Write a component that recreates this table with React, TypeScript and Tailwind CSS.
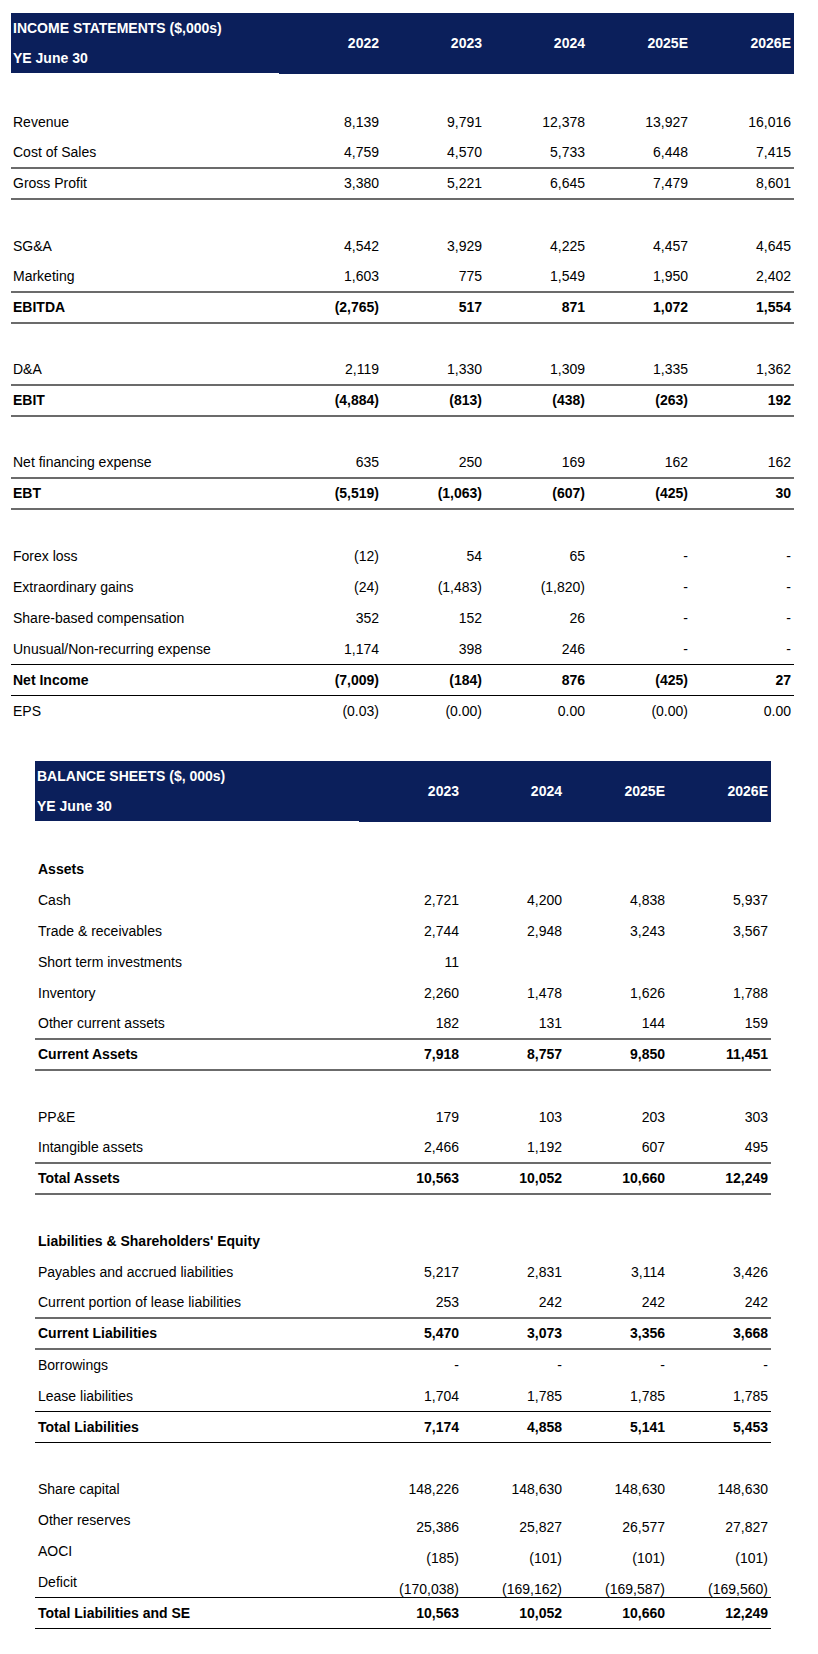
type Row = {
  label?: string;
  vals?: string[];
  bold?: boolean;
  line?: "gray" | "black";
  low?: boolean;
  gap?: string;
};

const income: Row[] = [
  { gap: "h-[33px]" },
  { label: "Revenue", vals: ["8,139", "9,791", "12,378", "13,927", "16,016"] },
  { label: "Cost of Sales", vals: ["4,759", "4,570", "5,733", "6,448", "7,415"], line: "gray" },
  { label: "Gross Profit", vals: ["3,380", "5,221", "6,645", "7,479", "8,601"], line: "gray" },
  {},
  { label: "SG&A", vals: ["4,542", "3,929", "4,225", "4,457", "4,645"] },
  { label: "Marketing", vals: ["1,603", "775", "1,549", "1,950", "2,402"], line: "gray" },
  { label: "EBITDA", vals: ["(2,765)", "517", "871", "1,072", "1,554"], bold: true, line: "gray" },
  {},
  { label: "D&A", vals: ["2,119", "1,330", "1,309", "1,335", "1,362"], line: "gray" },
  { label: "EBIT", vals: ["(4,884)", "(813)", "(438)", "(263)", "192"], bold: true, line: "gray" },
  {},
  { label: "Net financing expense", vals: ["635", "250", "169", "162", "162"], line: "gray" },
  { label: "EBT", vals: ["(5,519)", "(1,063)", "(607)", "(425)", "30"], bold: true, line: "gray" },
  {},
  { label: "Forex loss", vals: ["(12)", "54", "65", "-", "-"] },
  { label: "Extraordinary gains", vals: ["(24)", "(1,483)", "(1,820)", "-", "-"] },
  { label: "Share-based compensation", vals: ["352", "152", "26", "-", "-"] },
  { label: "Unusual/Non-recurring expense", vals: ["1,174", "398", "246", "-", "-"], line: "black" },
  { label: "Net Income", vals: ["(7,009)", "(184)", "876", "(425)", "27"], bold: true, line: "black" },
  { label: "EPS", vals: ["(0.03)", "(0.00)", "0.00", "(0.00)", "0.00"] },
];

const balance: Row[] = [
  { gap: "h-[32px]" },
  { label: "Assets", bold: true },
  { label: "Cash", vals: ["2,721", "4,200", "4,838", "5,937"] },
  { label: "Trade & receivables", vals: ["2,744", "2,948", "3,243", "3,567"] },
  { label: "Short term investments", vals: ["11", "", "", ""] },
  { label: "Inventory", vals: ["2,260", "1,478", "1,626", "1,788"] },
  { label: "Other current assets", vals: ["182", "131", "144", "159"], line: "gray" },
  { label: "Current Assets", vals: ["7,918", "8,757", "9,850", "11,451"], bold: true, line: "gray" },
  {},
  { label: "PP&E", vals: ["179", "103", "203", "303"] },
  { label: "Intangible assets", vals: ["2,466", "1,192", "607", "495"], line: "gray" },
  { label: "Total Assets", vals: ["10,563", "10,052", "10,660", "12,249"], bold: true, line: "gray" },
  {},
  { label: "Liabilities & Shareholders' Equity", bold: true },
  { label: "Payables and accrued liabilities", vals: ["5,217", "2,831", "3,114", "3,426"] },
  { label: "Current portion of lease liabilities", vals: ["253", "242", "242", "242"], line: "gray" },
  { label: "Current Liabilities", vals: ["5,470", "3,073", "3,356", "3,668"], bold: true, line: "gray" },
  { label: "Borrowings", vals: ["-", "-", "-", "-"] },
  { label: "Lease liabilities", vals: ["1,704", "1,785", "1,785", "1,785"], line: "black" },
  { label: "Total Liabilities", vals: ["7,174", "4,858", "5,141", "5,453"], bold: true, line: "black" },
  {},
  { label: "Share capital", vals: ["148,226", "148,630", "148,630", "148,630"] },
  { label: "Other reserves", vals: ["25,386", "25,827", "26,577", "27,827"], low: true },
  { label: "AOCI", vals: ["(185)", "(101)", "(101)", "(101)"], low: true },
  { label: "Deficit", vals: ["(170,038)", "(169,162)", "(169,587)", "(169,560)"], low: true, line: "black" },
  { label: "Total Liabilities and SE", vals: ["10,563", "10,052", "10,660", "12,249"], bold: true, line: "black" },
];

function Table({
  title,
  years,
  rows,
  labelWidth,
  indent,
}: {
  title: string;
  years: string[];
  rows: Row[];
  labelWidth: string;
  indent: string;
}) {
  return (
    <div className="flex flex-col">
      <div className="flex items-start text-[14px] font-bold text-white">
        <div className={`${labelWidth} h-[60px] bg-[#0b1f5b] flex flex-col pl-[2px]`}>
          <div className="h-[30px] flex items-center">{title}</div>
          <div className="h-[30px] flex items-center">YE June 30</div>
        </div>
        {years.map((y) => (
          <div key={y} className="w-[103px] h-[61px] bg-[#0b1f5b] flex items-center justify-end pr-[3px]">
            {y}
          </div>
        ))}
      </div>
      {rows.map((r, i) => (
        <div
          key={i}
          className={`flex ${r.gap ?? "h-[31px]"} items-center text-[14px] text-black ${r.bold ? "font-bold" : ""} ${
            r.line === "gray" ? "border-b-2 border-[#6b6b6b]" : r.line === "black" ? "border-b border-black" : ""
          }`}
        >
          <div className={`${labelWidth} pl-[2px] whitespace-nowrap ${indent}`}>{r.label}</div>
          {(r.vals ?? []).map((v, j) => (
            <div
              key={j}
              className={`w-[103px] pr-[3px] text-right whitespace-nowrap ${r.low ? "pt-[14px]" : ""}`}
            >
              {v}
            </div>
          ))}
        </div>
      ))}
    </div>
  );
}

export default function App() {
  return (
    <div className="w-[818px] min-h-[1654px] bg-white font-['Liberation_Sans',Arial,sans-serif] pt-[13px]">
      <div className="pl-[11px]">
        <div className="w-[783px]">
          <Table
            title="INCOME STATEMENTS ($,000s)"
            years={["2022", "2023", "2024", "2025E", "2026E"]}
            rows={income}
            labelWidth="w-[268px]"
            indent=""
          />
        </div>
      </div>
      <div className="pl-[35px] pt-[34px]">
        <div className="w-[736px]">
          <Table
            title="BALANCE SHEETS ($, 000s)"
            years={["2023", "2024", "2025E", "2026E"]}
            rows={balance}
            labelWidth="w-[324px]"
            indent="pl-[3px]"
          />
        </div>
      </div>
    </div>
  );
}
